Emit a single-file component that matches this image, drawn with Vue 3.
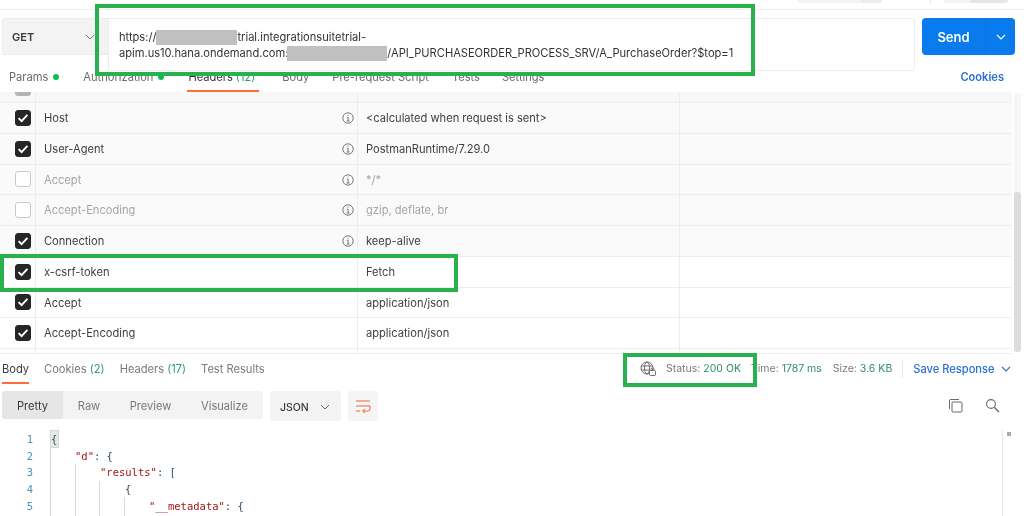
<script setup>
const rows = [
  { key: 'Host', value: '<calculated when request is sent>', on: true, info: true, sys: true },
  { key: 'User-Agent', value: 'PostmanRuntime/7.29.0', on: true, info: true, sys: true },
  { key: 'Accept', value: '*/*', on: false, info: true, sys: true },
  { key: 'Accept-Encoding', value: 'gzip, deflate, br', on: false, info: true, sys: true },
  { key: 'Connection', value: 'keep-alive', on: true, info: true, sys: true },
  { key: 'x-csrf-token', value: 'Fetch', on: true },
  { key: 'Accept', value: 'application/json', on: true },
  { key: 'Accept-Encoding', value: 'application/json', on: true },
]
const reqTabs = [
  { label: 'Params', dot: true, w: 'params' },
  { label: 'Authorization', dot: true, w: 'auth' },
  { label: 'Headers', count: '(12)', active: true, w: 'headers' },
  { label: 'Body', w: 'body' },
  { label: 'Pre-request Script', w: 'pre' },
  { label: 'Tests', w: 'tests' },
  { label: 'Settings', w: 'settings' },
]
const lines = [1, 2, 3, 4, 5]
</script>

<template>
  <div class="page">
    <div class="topstrip">
      <span class="pill one"></span>
      <span class="vsep"></span>
      <span class="pill two"></span>
    </div>

    <div class="request">
      <div class="method">
        <span>GET</span>
        <svg class="chev" width="10" height="6" viewBox="0 0 10 6"><path d="M1 1l4 4 4-4" fill="none" stroke="#777" stroke-width="1"/></svg>
      </div>
      <div class="url">
        <div>https://<span class="mask m1"></span>trial.integrationsuitetrial-</div>
        <div>apim.us10.hana.ondemand.com:<span class="mask m2"></span>/API_PURCHASEORDER_PROCESS_SRV/A_PurchaseOrder?$top=1</div>
      </div>
      <div class="send">
        <span class="send-label">Send</span>
        <span class="send-arrow">
          <svg width="10" height="6" viewBox="0 0 10 6"><path d="M1 1l4 4 4-4" fill="none" stroke="#fff" stroke-width="1.1"/></svg>
        </span>
      </div>
    </div>

    <div class="reqtabs">
      <div v-for="t in reqTabs" :key="t.label" class="reqtab" :class="[t.w, { active: t.active }]">
        <span>{{ t.label }}</span><span v-if="t.count" class="count">{{ t.count }}</span><i v-if="t.dot" class="dot"></i>
      </div>
      <div class="cookies">Cookies</div>
    </div>

    <div class="tablewrap">
      <div class="table">
        <div class="row sys stub">
          <div class="c-check"><span class="stubbox"></span></div>
          <div class="c-key"></div>
          <div class="c-val"></div>
          <div class="c-desc"></div>
        </div>
        <div v-for="(r, i) in rows" :key="i" class="row" :class="{ sys: r.sys, off: !r.on }">
          <div class="c-check">
            <span class="box" :class="{ on: r.on }">
              <svg v-if="r.on" width="12" height="10" viewBox="0 0 12 10"><path d="M1.6 5.2l3 3 5.8-6.4" fill="none" stroke="#fff" stroke-width="1.9"/></svg>
            </span>
          </div>
          <div class="c-key">
            <span>{{ r.key }}</span>
            <svg v-if="r.info" class="info" width="12" height="12" viewBox="0 0 12 12"><circle cx="6" cy="6" r="5.2" fill="none" stroke="#777" stroke-width="1"/><path d="M4.8 5.3H6.2V9M4.6 9H7.6M5.5 3.2H6.5" fill="none" stroke="#777" stroke-width="1"/></svg>
          </div>
          <div class="c-val">{{ r.value }}</div>
          <div class="c-desc"></div>
        </div>
        <div class="row stub2">
          <div class="c-check"></div>
          <div class="c-key"></div>
          <div class="c-val"></div>
          <div class="c-desc"></div>
        </div>
      </div>
      <div class="scroll"><span class="thumb"></span></div>
    </div>

    <div class="restabs">
      <div class="restab active">Body</div>
      <div class="restab">Cookies <span class="g">(2)</span></div>
      <div class="restab">Headers <span class="g">(17)</span></div>
      <div class="restab">Test Results</div>
      <div class="meta">
        <svg class="globe" width="16" height="15" viewBox="0 0 16 15">
          <circle cx="7" cy="7" r="6" fill="none" stroke="#6b6b6b" stroke-width="1"/>
          <ellipse cx="7" cy="7" rx="2.6" ry="6" fill="none" stroke="#6b6b6b" stroke-width="1"/>
          <path d="M1 5h12M1 9h8" fill="none" stroke="#6b6b6b" stroke-width="1"/>
          <rect x="9.5" y="9.5" width="6" height="5" rx="1" fill="#fff" stroke="#6b6b6b"/>
          <path d="M11 9.5V8.4a1.5 1.5 0 013 0v1.1" fill="none" stroke="#6b6b6b"/>
        </svg>
        <span class="stat s1">Status: <b>200 OK</b></span>
        <span class="stat s2">Time: <b>1787 ms</b></span>
        <span class="stat s3">Size: <b>3.6 KB</b></span>
        <span class="sep"></span>
        <span class="save">Save Response</span>
        <svg class="savechev" width="10" height="6" viewBox="0 0 10 6"><path d="M1 1l4 4 4-4" fill="none" stroke="#2f6fd8" stroke-width="1.1"/></svg>
      </div>
    </div>

    <div class="toolbar">
      <div class="seg">
        <span class="segitem pretty">Pretty</span>
        <span class="segitem raw">Raw</span>
        <span class="segitem preview">Preview</span>
        <span class="segitem vis">Visualize</span>
      </div>
      <div class="json">
        <span>JSON</span>
        <svg width="10" height="6" viewBox="0 0 10 6"><path d="M1 1l4 4 4-4" fill="none" stroke="#666" stroke-width="1"/></svg>
      </div>
      <div class="wrap">
        <svg width="16" height="13" viewBox="0 0 16 13"><path d="M1 1h14M1 6h14M1 11h4M15 6v3a2 2 0 01-2 2H8M10 8.6L7.6 11 10 13" fill="none" stroke="#e8673a" stroke-width="1"/></svg>
      </div>
      <div class="tools">
        <svg width="15" height="15" viewBox="0 0 15 15"><rect x="4" y="4" width="10" height="10" rx="1" fill="none" stroke="#6b6b6b"/><path d="M11 1.5H2.5a1 1 0 00-1 1V11" fill="none" stroke="#6b6b6b"/></svg>
        <svg width="15" height="15" viewBox="0 0 15 15"><circle cx="6" cy="6" r="4.4" fill="none" stroke="#6b6b6b" stroke-width="1.1"/><path d="M9.3 9.3l4.7 4.7" stroke="#6b6b6b" stroke-width="1.4"/></svg>
      </div>
    </div>

    <div class="code">
      <div class="gutter"><div v-for="n in lines" :key="n">{{ n }}</div></div>
      <div class="src">
        <div class="ln"><span class="brace">{</span></div>
        <div class="ln i1"><span class="k">"d"</span>: {</div>
        <div class="ln i2"><span class="k">"results"</span>: [</div>
        <div class="ln i3">{</div>
        <div class="ln i4"><span class="k">"__metadata"</span>: {</div>
        <i class="guide g0"></i><i class="guide g1"></i><i class="guide g2"></i><i class="guide g3"></i>
      </div>
      <div class="codescroll"><span></span></div>
    </div>

    <span class="mark mark-url"></span>
    <span class="mark mark-row"></span>
    <span class="mark mark-status"></span>
  </div>
</template>

<style>
html, body { margin: 0; background: #fff; }
</style>

<style scoped>
.page {
  position: relative;
  width: 1024px;
  height: 516px;
  overflow: hidden;
  background: #fff;
  font-family: Inter, "Noto Sans", sans-serif;
  font-size: 11.12px;
  color: #3a3a3a;
  filter: blur(0.35px);
}
.topstrip {
  height: 9px;
  border-bottom: 1px solid #f0f0f0;
  position: relative;
  margin-bottom: 8px;
}
.pill { position: absolute; top: 0; height: 3px; background: linear-gradient(90deg, #f5f5f5 75%, #ececec 75%); border-radius: 0 0 3px 3px; }
.pill.one { left: 797px; width: 85px; }
.pill.two { left: 944px; width: 64px; background: linear-gradient(90deg, #f5f5f5 40%, #e6e6e6 40%); }
.vsep { position: absolute; left: 930px; top: 0; width: 1px; height: 3px; background: #e6e6e6; }

.request { display: flex; align-items: flex-start; height: 53px; margin-left: 2px; }
.method {
  width: 106px;
  height: 37px;
  box-sizing: border-box;
  background: #f3f3f3;
  border: 1px solid #ececec;
  border-right: 0;
  border-radius: 3px 0 0 3px;
  display: flex;
  align-items: center;
  justify-content: space-between;
  padding: 1px 13px 0 9px;
  font-weight: 600;
  font-size: 11px;
}
.url {
  width: 807px;
  height: 53px;
  box-sizing: border-box;
  border: 1px solid #ededed;
  border-radius: 0 3px 3px 0;
  padding: 9.5px 10px;
  line-height: 16.5px;
  color: #333;
  white-space: nowrap;
}
.mask { display: inline-block; height: 15px; background: #c0c0c0; vertical-align: -4px; }
.m1 { width: 81px; }
.m2 { width: 100px; margin-left: -1px; }
.send {
  margin-left: 7px;
  width: 93px;
  height: 37px;
  border-radius: 4px;
  background: #097bed;
  color: #fff;
  display: flex;
  align-items: center;
}
.send-label { width: 63px; text-align: center; font-weight: 600; font-size: 13px; }
.send-arrow { flex: 1; height: 100%; display: flex; align-items: center; justify-content: center; border-left: 1px solid #0b72dc; }

.reqtabs {
  display: flex;
  align-items: flex-start;
  height: 21px;
  position: relative;
  color: #6b6b6b;
}
.reqtab { position: relative; height: 20px; box-sizing: border-box; padding-bottom: 8px; display: flex; align-items: center; white-space: nowrap; }
.params { margin-left: 9px; }
.auth { margin-left: 24px; }
.headers { margin-left: 24px; color: #333; }
.body { margin-left: 27px; }
.pre { margin-left: 23px; }
.tests { margin-left: 23px; }
.settings { margin-left: 22px; }
.count { color: #2f9e61; margin-left: 3px; }
.dot { width: 6px; height: 6px; border-radius: 50%; background: #0cbb52; margin-left: 5px; }
.reqtab.active::after {
  content: '';
  position: absolute;
  left: -1px;
  right: -4px;
  bottom: -1px;
  height: 2px;
  background: #ff6c37;
}
.cookies { margin-left: auto; margin-right: 20px; height: 12px; line-height: 12px; color: #2a6fd6; font-weight: 600; }

.tablewrap { display: flex; height: 262px; }
.table { width: 1012px; border-bottom: 1px solid #ececec; }
.row {
  display: flex;
  height: 30.75px;
  box-sizing: border-box;
  border-bottom: 1px solid #ededed;
  align-items: stretch;
}
.row.sys { background: #fafafa; }
.row.stub { height: 11px; background: #f7f7f7; overflow: hidden; }
.row.stub2 { height: 5px; border-bottom: 0; }
.c-check { width: 36px; flex: none; border-right: 1px solid #ededed; box-sizing: border-box; display: flex; align-items: center; padding-left: 15px; }
.c-key { width: 322px; flex: none; border-right: 1px solid #ededed; box-sizing: border-box; padding: 0.5px 3px 0 8px; display: flex; align-items: center; justify-content: space-between; color: #3f3f3f; }
.c-val { width: 322px; flex: none; border-right: 1px solid #ededed; box-sizing: border-box; padding: 0.5px 0 0 8px; display: flex; align-items: center; color: #3f3f3f; }
.c-desc { flex: 1; }
.off .c-key span, .off .c-val { color: #a6a6a6; }
.box {
  width: 16px;
  height: 16px;
  box-sizing: border-box;
  border-radius: 3px;
  border: 1px solid #c9c9c9;
  background: #fff;
  display: flex;
  align-items: center;
  justify-content: center;
}
.box.on { background: #262626; border-color: #262626; }
.stubbox { width: 16px; height: 12px; align-self: flex-start; margin-top: -8px; background: #b5b5b5; border-radius: 3px; }
.scroll { width: 12px; position: relative; }
.scroll::before { content: ''; position: absolute; left: 2px; width: 7px; top: 1px; bottom: 2px; background: #f6f6f6; border-radius: 3px; }
.thumb { position: absolute; left: 2px; width: 7px; top: 100px; height: 160px; background: #dcdcdc; border-radius: 3px; }

.restabs { height: 37px; display: flex; align-items: flex-start; position: relative; color: #7a7a7a; }
.restab { position: relative; height: 29px; line-height: 31px; margin-right: 15px; }
.restab:first-child { margin-left: 2px; }
.restab.active { color: #3a3a3a; }
.restab.active::after { content: ''; position: absolute; left: 0; right: 0; top: 28px; height: 2px; background: #ff6c37; }
.g { color: #2f9e61; }
.meta { margin-left: auto; height: 29px; display: flex; align-items: center; position: relative; width: 384px; }
.stat { color: #7a7a7a; white-space: pre; font-size: 10.5px; }
.stat b { font-weight: 400; color: #2f9162; }
.s1 { margin-left: 10px; }
.s2 { margin-left: 10px; }
.s3 { margin-left: 11px; }
.sep { width: 1px; height: 18px; background: #e6e6e6; margin-left: 10px; }
.save { margin-left: 10px; color: #2a6fd6; font-weight: 500; }
.savechev { margin-left: 6px; }

.toolbar { height: 40px; display: flex; align-items: flex-start; position: relative; margin-left: 2px; }
.seg { width: 261px; height: 28px; box-sizing: border-box; background: #f3f3f3; border-radius: 3px; display: flex; overflow: hidden; color: #7a7a7a; }
.segitem { display: flex; align-items: center; justify-content: center; height: 100%; flex: none; box-sizing: border-box; padding-top: 2px; }
.pretty { width: 61px; background: #e6e6e6; color: #3a3a3a; }
.raw { width: 52px; }
.preview { width: 71px; }
.vis { width: 77px; }
.json { margin-left: 7px; width: 71px; height: 30px; box-sizing: border-box; padding: 2px 11px 0 10px; background: #f3f3f3; border-radius: 3px; display: flex; align-items: center; justify-content: space-between; font-weight: 500; font-size: 10.5px; }
.wrap { margin-left: 7px; width: 30px; height: 30px; background: #f5f5f5; border-radius: 3px; display: flex; align-items: center; justify-content: center; }
.tools { margin-left: auto; margin-right: 24px; display: flex; gap: 22px; padding-top: 7px; }

.code {
  display: flex;
  position: relative;
  font-family: "DejaVu Sans Mono", monospace;
  font-size: 10.5px;
  line-height: 16.7px;
}
.gutter { width: 33px; text-align: right; color: #4f93bb; flex: none; }
.src { margin-left: 16px; position: relative; color: #2d4a66; flex: 1; }
.ln { white-space: pre; height: 16.7px; padding-left: 3px; }
.i1 { padding-left: 26px; }
.i2 { padding-left: 51px; }
.i3 { padding-left: 76px; }
.i4 { padding-left: 100px; }
.k { color: #a31515; }
.brace { display: inline-block; width: 7px; height: 16px; margin-left: -1px; background: #e4ebe6; box-shadow: 0 0 0 1px #d3dad5; }
.guide { position: absolute; width: 1px; background: #d8d8d8; }
.g0 { left: 1px; top: 15px; height: 72px; }
.g1 { left: 26px; top: 33px; height: 54px; }
.g2 { left: 50px; top: 50px; height: 37px; }
.g3 { left: 75px; top: 66px; height: 21px; }
.codescroll { position: absolute; left: 1002px; top: -1px; width: 8px; height: 90px; border-left: 1px solid #e6e6e6; }
.codescroll span { position: absolute; left: 4px; top: 2px; width: 4px; height: 4px; background: #aaa; }

.mark { position: absolute; box-sizing: border-box; border: 4px solid #27b14f; }
.mark-url { left: 95px; top: 4px; width: 660px; height: 72px; }
.mark-row { left: 0; top: 254px; width: 458px; height: 38px; }
.mark-status { left: 623px; top: 353px; width: 134px; height: 34px; }
</style>
